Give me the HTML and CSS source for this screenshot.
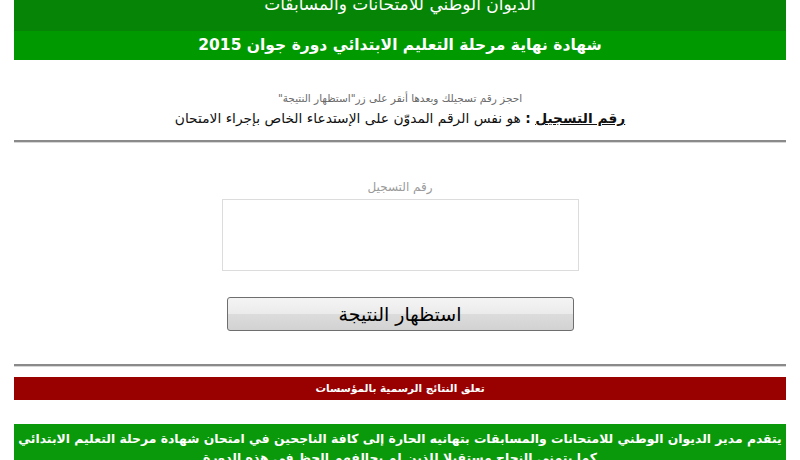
FILE: index.html
```html
<!DOCTYPE html>
<html lang="ar" dir="rtl">
<head>
<meta charset="utf-8">
<title>نتائج شهادة نهاية مرحلة التعليم الابتدائي</title>
<link rel="stylesheet" href="styles.css">
</head>
<body>
<div class="page">
  <div class="top-band">الديوان الوطني للامتحانات والمسابقات</div>
  <div class="title-band">شهادة نهاية مرحلة التعليم الابتدائي دورة جوان 2015</div>
  <div class="intro">
    <p class="hint">احجز رقم تسجيلك وبعدها أنقر على زر"استظهار النتيجة"</p>
    <p class="note"><b class="key">رقم التسجيل</b> <b>:</b> هو نفس الرقم المدوّن على الإستدعاء الخاص بإجراء الامتحان</p>
  </div>
  <hr class="rule">
  <form class="search">
    <label class="label" for="num">رقم التسجيل</label>
    <textarea id="num" class="field"></textarea>
    <button type="button" class="btn">استظهار النتيجة</button>
  </form>
  <hr class="rule rule-low">
  <div class="red-band">تعلق النتائج الرسمية بالمؤسسات</div>
  <div class="green-band">يتقدم مدير الديوان الوطني للامتحانات والمسابقات بتهانيه الحارة إلى كافة الناجحين في امتحان شهادة مرحلة التعليم الابتدائي<br>كما يتمنى النجاح مستقبلا للذين لم يحالفهم الحظ في هذه الدورة</div>
</div>
</body>
</html>
```
FILE: styles.css
```css
html, body {
  margin: 0;
  padding: 0;
  background: #ffffff;
}
body {
  font-family: "DejaVu Sans", "Liberation Sans", sans-serif;
  overflow: hidden;
}
.page {
  width: 772px;
  margin: 0 auto;
  text-align: center;
}
.top-band {
  height: 31px;
  background: #068406;
  color: #ffffff;
  font-size: 17px;
  line-height: 8px;
  overflow: visible;
}
.title-band {
  height: 29px;
  background: #009900;
  color: #ffffff;
  font-size: 15.5px;
  font-weight: bold;
  line-height: 29px;
}
.intro {
  padding-top: 28px;
  padding-bottom: 12px;
}
.intro p {
  margin: 0;
  line-height: 20px;
}
.hint {
  color: #6a6a6a;
  font-size: 10.5px;
}
.note {
  color: #111111;
  font-size: 13.8px;
}
.key {
  text-decoration: underline;
}
.rule {
  margin: 0;
  height: 0;
  border: 0;
  border-top: 2px solid #8a8a8a;
  border-bottom: 1px solid #d6d6d6;
}
.search {
  display: flex;
  flex-direction: column;
  align-items: center;
  padding-top: 35px;
  padding-bottom: 33px;
}
.label {
  color: #9a9a9a;
  font-size: 12px;
  line-height: 18px;
  margin-bottom: 3px;
}
.field {
  box-sizing: border-box;
  width: 357px;
  height: 72px;
  border: 1px solid #dcdcdc;
  resize: none;
  margin: 0 0 26px 0;
  padding: 0;
}
.btn {
  box-sizing: border-box;
  width: 347px;
  height: 34px;
  border: 1px solid #6e6e6e;
  border-radius: 3px;
  background: linear-gradient(#f4f4f4 0%, #ebebeb 50%, #dcdcdc 51%, #d2d2d2 100%);
  font-family: "DejaVu Sans", sans-serif;
  font-size: 19px;
  color: #000000;
  padding: 0;
}
.rule-low {
  margin-bottom: 10px;
}
.red-band {
  height: 23px;
  background: #990000;
  color: #ffffff;
  font-size: 10.5px;
  font-weight: bold;
  line-height: 23px;
  margin-bottom: 24px;
}
.green-band {
  background: #0a990a;
  color: #ffffff;
  font-size: 12.4px;
  font-weight: bold;
  line-height: 19px;
  padding-top: 5px;
  padding-bottom: 8px;
}
```
